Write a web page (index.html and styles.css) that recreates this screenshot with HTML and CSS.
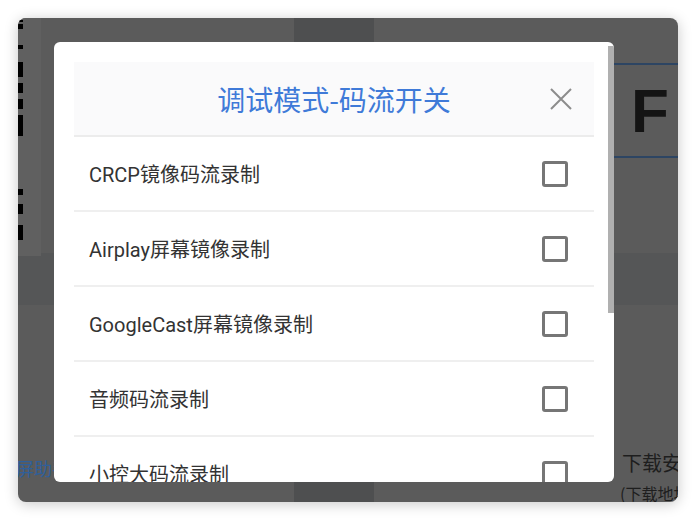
FILE: index.html
```html
<!DOCTYPE html>
<html lang="zh-CN">
<head>
<meta charset="utf-8">
<title>调试模式-码流开关</title>
<link rel="stylesheet" href="styles.css">
</head>
<body>
<div class="window">
  <div class="page">
    <div class="col-left">
      <div class="dashes"></div>
      <div class="help-link">屏助手</div>
    </div>
    <div class="col-mid"></div>
    <div class="col-right">
      <div class="letter-box">F</div>
      <div class="download">下载安装</div>
      <div class="download-sub">(下载地址</div>
    </div>
  </div>

  <div class="dialog">
    <div class="dialog-inner">
      <div class="dialog-header">
        <h1 class="dialog-title">调试模式-码流开关</h1>
        <button class="close-btn" aria-label="关闭">
          <svg width="22" height="22" viewBox="0 0 22 22"><path d="M1 1 L21 21 M21 1 L1 21" stroke="#8c8c8c" stroke-width="2" fill="none"/></svg>
        </button>
      </div>
      <ul class="option-list">
        <li class="option"><span class="option-label">CRCP镜像码流录制</span><span class="checkbox"></span></li>
        <li class="option"><span class="option-label">Airplay屏幕镜像录制</span><span class="checkbox"></span></li>
        <li class="option"><span class="option-label">GoogleCast屏幕镜像录制</span><span class="checkbox"></span></li>
        <li class="option"><span class="option-label">音频码流录制</span><span class="checkbox"></span></li>
        <li class="option"><span class="option-label">小控大码流录制</span><span class="checkbox"></span></li>
      </ul>
    </div>
    <div class="scroll-thumb"></div>
  </div>
</div>
</body>
</html>
```

FILE: styles.css
```css
* { box-sizing: border-box; }

html, body {
  margin: 0;
  padding: 0;
  background: #ffffff;
}

body {
  font-family: Roboto, "Noto Sans CJK SC", sans-serif;
}

.window {
  position: relative;
  margin: 18px;
  width: 660px;
  height: 484px;
  border-radius: 8px;
  overflow: hidden;
  background-color: #5b5b5b;
  background-image:
    linear-gradient(to bottom, transparent 235px, #555657 235px, #555657 287px, transparent 287px);
  box-shadow: 0 2px 14px rgba(0, 0, 0, 0.22);
}

.page {
  display: grid;
  grid-template-columns: 276px 80px 1fr;
  height: 100%;
}

.col-left {
  display: flex;
  flex-direction: column;
  background-image: linear-gradient(to right, #606060 0, #606060 23px, transparent 23px);
  background-size: 100% 238px;
  background-repeat: no-repeat;
}

.dashes {
  width: 5px;
  height: 220px;
  margin-top: 2px;
  background:
    linear-gradient(to bottom,
      #000 2px, transparent 2px, transparent 4px, #000 4px, #000 9px,
      transparent 9px, transparent 25px, #000 25px, #000 29px,
      transparent 29px, transparent 42px, #000 42px, #000 57px,
      transparent 57px, transparent 63px, #000 63px, #000 73px,
      transparent 73px, transparent 79px, #000 79px, #000 89px,
      transparent 89px, transparent 95px, #000 95px, #000 116px,
      transparent 116px, transparent 169px, #000 169px, #000 175px,
      transparent 175px, transparent 184px, #000 184px, #000 194px,
      transparent 194px, transparent 205px, #000 205px, #000 220px);
}

.help-link {
  margin-top: 215px;
  margin-left: -2px;
  font-family: "Noto Sans CJK SC", sans-serif;
  font-size: 18px;
  color: #2f5f9a;
  white-space: nowrap;
}

.col-mid {
  background: #4e4f50;
}

.col-right {
  display: flex;
  flex-direction: column;
  padding-left: 240px;
  overflow: hidden;
}

.letter-box {
  margin-top: 45px;
  height: 95px;
  border-top: 2px solid #2d4563;
  border-bottom: 2px solid #2d4563;
  font-family: "Liberation Sans", Arial, sans-serif;
  font-weight: bold;
  font-size: 62px;
  line-height: 91px;
  color: #141414;
  padding-left: 17px;
}

.download {
  margin-top: 293px;
  padding-left: 8px;
  font-family: "Noto Sans CJK SC", sans-serif;
  font-size: 20px;
  line-height: 24px;
  color: #1e1e1e;
  white-space: nowrap;
}

.download-sub {
  margin-top: 8px;
  padding-left: 6px;
  font-family: "Noto Sans CJK SC", sans-serif;
  font-size: 16px;
  line-height: 20px;
  color: #1e1e1e;
  white-space: nowrap;
}

.dialog {
  position: absolute;
  left: 36px;
  top: 24px;
  width: 560px;
  height: 440px;
  background: #ffffff;
  border-radius: 6px;
  overflow: hidden;
}

.dialog-inner {
  padding: 20px 20px 0 20px;
}

.dialog-header {
  position: relative;
  height: 75px;
  background: #fafafb;
  border-bottom: 2px solid #ececec;
  display: flex;
  align-items: center;
  justify-content: center;
}

.dialog-title {
  margin: 0;
  font-family: "Noto Sans CJK SC", sans-serif;
  font-weight: normal;
  font-size: 28px;
  line-height: 36px;
  color: #3f7ad8;
}

.close-btn {
  position: absolute;
  right: 22px;
  top: 26px;
  width: 22px;
  height: 22px;
  padding: 0;
  border: 0;
  background: none;
  display: block;
}

.close-btn svg { display: block; }

.option-list {
  list-style: none;
  margin: 0;
  padding: 0;
}

.option {
  height: 75px;
  border-bottom: 2px solid #efefef;
  display: flex;
  align-items: center;
  justify-content: space-between;
  padding: 0 26px 0 15px;
}

.option-label {
  font-size: 20px;
  color: #333333;
}

.checkbox {
  width: 26px;
  height: 26px;
  border: 3px solid #767676;
  border-radius: 3px;
}

.scroll-thumb {
  position: absolute;
  right: 0;
  top: 4px;
  width: 6px;
  height: 267px;
  background: #b0b0b0;
}
```
